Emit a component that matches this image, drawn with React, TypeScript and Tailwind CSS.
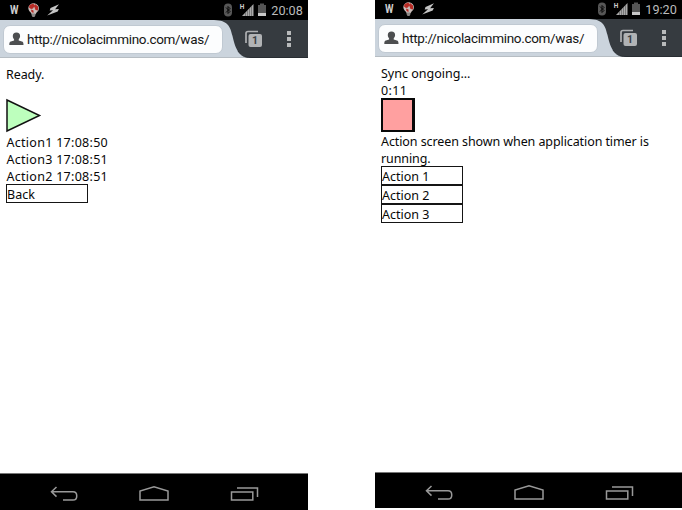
import type { ReactNode } from "react";

function StatusBar({ time, height }: { time: string; height: string }) {
  return (
    <div className={`flex shrink-0 bg-black ${height}`}>
      <svg viewBox="0 0 70 20" className="h-5 w-[70px] shrink-0">
        <text x="10" y="14.300" textLength="8.500" lengthAdjust="spacingAndGlyphs" fill="#d0d0d0" fontSize="12" fontWeight="700" fontFamily="Roboto, sans-serif">W</text>
        <path d="M28.300 8a5.300 5 0 1 1 10.500 1.200c-.3 2.300-2.500 3-3 4.800h-4.200c-.5-1.700-3-2.500-3.300-6Z" fill="#c9bcb9" />
        <path d="m29.500 5 4-1.500 1 2.500-1.500 2.500-2 .5-2-1.500Zm5.500-1 3 2.500v4l-2.500-.5-1.500-4ZM31 9.500l2.500 1v2.500l-2-1Z" fill="#b82b25" />
        <path d="M31.500 13.500h4v1.500l-1 2h-2l-1-2Z" fill="#8c8785" />
        <path d="M59 4.300 50.500 8l-.8 2.500 3.300-.2-5.800 5.200 10.500-4 1.200-2.500-3.800.2Z" fill="#c4c4c4" />
      </svg>
      <div className="flex-1" />
      <svg viewBox="221 0 87 20" className="h-5 w-[87px] shrink-0">
        <rect x="224" y="3.500" width="8" height="13" rx="4" fill="#575757" />
        <path d="m226 7.500 4 4-2 2v-7l2 2-4 4" fill="none" stroke="#080808" strokeWidth="1" />
        <text x="239.700" y="9" fill="#cccccc" fontSize="6.500" fontWeight="700" fontFamily="Roboto, sans-serif">H</text>
        <path d="M242 16 253.500 4v12Z" fill="#aaa" />
        <path d="M245.500 12v4m2-6v6m2-8v8m2-10v10" stroke="#555" strokeWidth=".6" />
        <path d="M258 5h2V3.500h4V5h2v8h-8Z" fill="#555" />
        <path d="M258 13h8v3h-8Z" fill="#c9c9c9" />
        <text x="271.300" y="15" textLength="31.500" lengthAdjust="spacingAndGlyphs" fill="#bcbcbc" fontSize="13.500" fontFamily="Roboto, sans-serif">{time}</text>
      </svg>
    </div>
  );
}

function BrowserBar() {
  return (
    <div className="flex h-[38px] shrink-0 border-b border-[#b6bdc3] bg-[#cbd4dd] pl-[3px]">
      <div className="relative z-10 mt-[5px] flex h-[29px] w-[220px] shrink-0 items-center rounded-[7px] border border-[#c0c9d2] bg-[#fcfdfe] pb-px pl-[5px]">
        <svg viewBox="0 0 15 14" className="h-3.5 w-[15px] shrink-0">
          <path d="M3.800 4a3.600 3.500 0 1 1 7.300 0c0 1.900-.9 2.600-1.400 3.400v1.200l3.200.8c1.200.3 1.600 1.200 1.600 3.500H.3c0-2.200.4-3.200 1.600-3.500l3.200-.8V7.400C4.500 6.600 3.800 5.900 3.800 4Z" fill="#4c4e50" />
        </svg>
        <span className="ml-[3px] whitespace-nowrap pb-px font-['Roboto',sans-serif] text-[13.5px] leading-[18px] tracking-[-0.31px] text-[#151515]">
          http://nicolacimmino.com/was/
        </span>
      </div>
      <div className="-ml-3 min-w-0 flex-1">
        <svg viewBox="211 0 97 38" preserveAspectRatio="xMinYMin slice" className="h-[38px] w-full">
          <path d="M214 0C228 .5 230 6 232.500 16C235 27 238 38 252 38H308V0Z" fill="#363b40" />
          <path d="M238 31C241 35.500 244 37.500 251 37.500H308" fill="none" stroke="#242a2f" strokeWidth=".8" />
          <path d="M246 23V13.500q0-2 2-2H258" fill="none" stroke="#aeb0b2" strokeWidth="1.700" />
          <rect x="248.500" y="14" width="13.500" height="13" rx="2" fill="#b1b3b5" />
          <text x="252" y="24.300" fontSize="10.500" fontWeight="700" fill="#3b4045" fontFamily="Roboto, sans-serif">1</text>
          <path d="M287 11h4v4h-4zm0 6h4v4h-4zm0 6h4v4h-4z" fill="#b8babb" />
        </svg>
      </div>
    </div>
  );
}

function NavigationBar({ height }: { height: string }) {
  return (
    <div className={`shrink-0 border-t border-[#777] bg-black ${height}`}>
      <svg viewBox="0 0 308 36" className="h-9 w-[308px]" fill="none" stroke="#999" strokeWidth="1.500">
        <path d="m56.500 13-5 4.800 5 4.800M52 17.800h21c5 0 5 8.200 0 8.200H63" />
        <path d="M140 26v-9l14-4.300L168 17v9Z" />
        <path d="M231.500 18h21.300v8h-21.300ZM237 14h20.500v9" />
      </svg>
    </div>
  );
}

function ActionButton({ children }: { children: ReactNode }) {
  return (
    <button className="block h-[19px] w-[82px] border border-[#151515] bg-white text-left leading-[17px]">
      <span className="block pt-px">{children}</span>
    </button>
  );
}

export default function App() {
  return (
    <main className="flex h-[510px] w-[682px] items-start justify-between overflow-hidden bg-white">
      <section className="flex h-[510px] w-[308px] flex-col overflow-hidden">
        <StatusBar time="20:08" height="h-5" />
        <BrowserBar />
        <div className="flex-1 pl-1.5 pt-2 font-['Noto_Sans',sans-serif] text-[12.5px] leading-[17px] text-[#080808]">
          <p className="tracking-[-0.1px]">Ready.</p>
          <svg viewBox="0 0 36 35" className="mt-[15px] mb-px block h-[35px] w-9">
            <path d="M1 2v31l32.500-15.500Z" fill="#bdffbd" stroke="#111" strokeWidth="1.500" />
          </svg>
          <div className="pl-[0.5px] tracking-[0.28px]">
            <p>Action1 17:08:50</p>
            <p>Action3 17:08:51</p>
            <p>Action2 17:08:51</p>
          </div>
          <div className="-mt-px"><ActionButton>Back</ActionButton></div>
        </div>
        <NavigationBar height="h-[37px]" />
      </section>
      <section className="flex h-[508px] w-[307px] flex-col overflow-hidden">
        <StatusBar time="19:20" height="h-[19px] items-end" />
        <BrowserBar />
        <div className="flex-1 pl-1.5 pt-2 font-['Noto_Sans',sans-serif] text-[12.5px] leading-[17px] text-[#080808]">
          <p>Sync ongoing...</p>
          <p className="tracking-[0.4px]">0:11</p>
          <div className="mb-px mt-[-1px] h-[34px] w-[34px] border-2 border-r-[3px] border-[#080808] bg-[#ffa0a0]" />
          <p className="whitespace-nowrap tracking-[-0.09px]">Action screen shown when application timer is<br />running.</p>
          <div className="-mt-px">
            <ActionButton>Action 1</ActionButton>
            <ActionButton>Action 2</ActionButton>
            <ActionButton>Action 3</ActionButton>
          </div>
        </div>
        <NavigationBar height="h-9" />
      </section>
    </main>
  );
}
